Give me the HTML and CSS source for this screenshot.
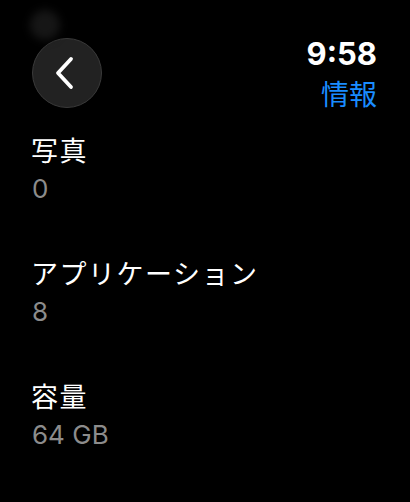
FILE: index.html
```html
<!DOCTYPE html>
<html lang="ja">
<head>
    <meta charset="UTF-8">
    <meta name="viewport" content="width=device-width, initial-scale=1.0">
    <title>情報</title>
    <link rel="stylesheet" href="styles.css">
</head>
<body>
    <div class="screen">
        <div class="glow"></div>

        <header class="top">
            <button class="back" aria-label="戻る">
                <svg width="20" height="34" viewBox="0 0 20 34">
                    <path d="M16 3 L3 17 L16 31" fill="none" stroke="#fff" stroke-width="3.8" stroke-linecap="round" stroke-linejoin="round"/>
                </svg>
            </button>
            <div class="status">
                <div class="time">9:58</div>
                <div class="page-title">情報</div>
            </div>
        </header>

        <div class="info-list">
            <div class="info-row">
                <div class="label">写真</div>
                <div class="value">0</div>
            </div>
            <div class="info-row">
                <div class="label">アプリケーション</div>
                <div class="value">8</div>
            </div>
            <div class="info-row">
                <div class="label">容量</div>
                <div class="value">64 GB</div>
            </div>
        </div>
    </div>
</body>
</html>
```

FILE: styles.css
```css
body {
    background-color: #000;
    color: #fff;
    font-family: Inter, "Noto Sans CJK JP", sans-serif;
    margin: 0;
    padding: 0;
}

.screen {
    position: relative;
    width: 410px;
    height: 502px;
    padding: 38px 33px 0 32px;
    box-sizing: border-box;
    overflow: hidden;
}

.glow {
    position: absolute;
    left: 30px;
    top: 10px;
    width: 30px;
    height: 30px;
    border-radius: 50%;
    background-color: #161616;
    filter: blur(4px);
}

.top {
    display: flex;
    justify-content: space-between;
    align-items: flex-start;
}

.back {
    width: 70px;
    height: 70px;
    border-radius: 50%;
    background-color: #222;
    border: 1px solid #3a3a3a;
    box-sizing: border-box;
    display: flex;
    align-items: center;
    justify-content: center;
    padding: 0 4px 0 0;
    cursor: pointer;
}

.status {
    display: flex;
    flex-direction: column;
    align-items: flex-end;
    padding-top: 1px;
    gap: 10px;
}

.time {
    font-size: 31px;
    font-weight: 700;
    line-height: 30px;
}

.page-title {
    font-family: "Noto Sans CJK JP", sans-serif;
    font-size: 28px;
    line-height: 28px;
    color: #1a8cff;
}

.info-list {
    margin-top: 28px;
    display: flex;
    flex-direction: column;
    gap: 57px;
}

.label {
    font-family: "Noto Sans CJK JP", sans-serif;
    font-size: 27px;
    line-height: 27px;
    letter-spacing: 1.5px;
    margin-left: -1px;
}

.value {
    margin-top: 13px;
    font-size: 26px;
    line-height: 26px;
    color: #8c8c8c;
}
```
